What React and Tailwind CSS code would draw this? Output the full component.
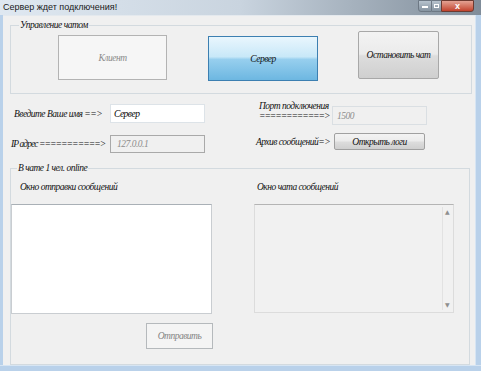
export default function App() {
    return (
        <div className="w-[481px] h-[371px] overflow-hidden bg-[#bfd5ea] flex flex-col font-['Liberation_Serif',serif]">

            {/* TITLE BAR */}
            <div className="h-[15px] flex items-start bg-gradient-to-r from-[#dfe8f1] via-[#c9d4df] to-[#7f8c99]">
                <span className="pl-[3px] pt-[2px] text-[9px] leading-[11px] text-[#1a1a1a] font-['Liberation_Sans',sans-serif]">
                    Сервер ждет подключения!
                </span>
                <div className="ml-auto mr-[7px] flex h-[13px]">
                    <div className="w-[14px] h-[12px] bg-gradient-to-b from-[#b7c3ce] to-[#8593a0] border border-[#6d7884] rounded-bl-[3px] flex items-end justify-center pb-[3px]">
                        <div className="w-[6px] h-[2px] bg-white" />
                    </div>
                    <div className="w-[9px] h-[12px] bg-gradient-to-b from-[#b7c3ce] to-[#8593a0] border-y border-[#6d7884] flex items-center justify-center">
                        <div className="w-[5px] h-[4px] border border-white" />
                    </div>
                    <div className="w-[33px] h-[12px] bg-gradient-to-b from-[#e3a293] to-[#c1412c] border border-[#6d3a30] rounded-br-[3px] flex items-center justify-center text-white text-[9px] leading-none font-bold font-['Liberation_Sans',sans-serif]">
                        x
                    </div>
                </div>
            </div>

            {/* WINDOW BODY */}
            <div className="flex h-[350px]">
                <div className="w-[3px] bg-[#b9d1ea]" />
                <div className="w-[472px] bg-[#f0f0f0] border-t border-[#e4e9ee] flex flex-col text-[9.5px] leading-[12px] tracking-[-0.5px] italic text-[#111]">

                    {/* УПРАВЛЕНИЕ ЧАТОМ */}
                    <fieldset className="ml-[7px] mt-[3px] w-[462px] h-[75px] border border-[#d3dadf]">
                        <legend className="ml-[8px] px-[1px] leading-[12px]">Управление чатом</legend>
                        <div className="flex items-start">
                            <div className="ml-[47px] mt-[4px] w-[109px] h-[45px] bg-[#f6f6f6] border border-[#b3b3b3] flex items-center justify-center text-[#8a8a8a]">
                                Клиент
                            </div>
                            <div className="ml-[41px] mt-[5px] w-[110px] h-[45px] border border-[#3c7fb1] bg-[linear-gradient(#e9f6fd_0%,#c8e8f8_46%,#97cfee_52%,#6db7e1_100%)] flex items-center justify-center">
                                Сервер
                            </div>
                            <div className="ml-[40px] mt-0 w-[81px] h-[48px] border border-[#a8a8a8] rounded-[2px] bg-[linear-gradient(#f3f3f3_0%,#ebebeb_48%,#dddddd_52%,#cfcfcf_100%)] flex items-center justify-center whitespace-nowrap">
                                Остановить чат
                            </div>
                        </div>
                    </fieldset>

                    {/* ПАРАМЕТРЫ */}
                    <div className="flex items-start">
                        <div className="ml-[8px] w-[197px] flex flex-col">
                            <div className="mt-[10px] h-[19px] flex items-center">
                                <span className="w-[99px] pl-[3px] whitespace-nowrap">Введите Ваше имя ==&gt;</span>
                                <div className="w-[95px] h-[19px] bg-white border border-[#dde3e8] pl-[3px] flex items-center text-black">
                                    Сервер
                                </div>
                            </div>
                            <div className="mt-[12px] h-[18px] flex items-center">
                                <span className="w-[99px] whitespace-nowrap tracking-[-0.9px]">IP адрес ===========&gt;</span>
                                <div className="w-[95px] h-[18px] bg-[#f0f0f0] border border-[#a9a9a9] pl-[6px] flex items-center text-[#8d8d8d]">
                                    127.0.0.1
                                </div>
                            </div>
                        </div>
                        <div className="ml-[48px] flex flex-col">
                            <div className="mt-[7px] flex items-start">
                                <div className="w-[76px] pl-[3px] leading-[10px] whitespace-nowrap">
                                    Порт подключения<br />
                                    <span className="tracking-[-1px]">============&gt;</span>
                                </div>
                                <div className="mt-[5px] w-[95px] h-[19px] bg-[#f0f0f0] border border-[#dadfe3] pl-[4px] flex items-center text-[#8d8d8d]">
                                    1500
                                </div>
                            </div>
                            <div className="mt-[8px] flex items-center">
                                <span className="w-[78px] whitespace-nowrap">Архив сообщений=&gt;</span>
                                <div className="w-[91px] h-[17px] border border-[#a0a0a0] rounded-[2px] bg-[linear-gradient(#f3f3f3_0%,#ebebeb_48%,#dddddd_52%,#cfcfcf_100%)] flex items-center justify-center">
                                    Открыть логи
                                </div>
                            </div>
                        </div>
                    </div>

                    {/* В ЧАТЕ */}
                    <fieldset className="ml-[7px] mt-[9px] w-[460px] h-[203px] border border-[#d3dadf]">
                        <legend className="ml-[6px] px-[1px] leading-[12px]">В чате 1 чел. online</legend>
                        <div className="mt-[7px] flex">
                            <span className="pl-[9px] w-[246px]">Окно отправки сообщений</span>
                            <span>Окно чата сообщений</span>
                        </div>
                        <div className="mt-[11px] flex items-start">
                            <div className="w-[201px] h-[110px] bg-white border border-[#c9cdd1] border-t-[#a9b0b6]" />
                            <div className="ml-[42px] w-[200px] h-[109px] bg-[#f1f1f1] border border-[#dcdcdc] border-t-[#b4b4b4] flex justify-end p-[2px]">
                                <div className="w-[9px] border-l border-[#e2e2e2] flex flex-col items-center justify-between py-[2px] text-[6px] leading-[6px] not-italic text-[#8e8e8e] font-['DejaVu_Sans',sans-serif]">
                                    <span>▲</span>
                                    <span>▼</span>
                                </div>
                            </div>
                        </div>
                        <div className="mt-[9px] ml-[135px] w-[67px] h-[26px] bg-[#f4f4f4] border border-[#b5b9bc] flex items-center justify-center text-[#848484]">
                            Отправить
                        </div>
                    </fieldset>
                </div>
                <div className="w-[6px] bg-[#b9d1ea] border-l border-[#d7e5f3]" />
            </div>
            <div className="h-[6px] bg-[#b9d1ea] border-t border-[#d7e5f3]" />
        </div>
    );
}
